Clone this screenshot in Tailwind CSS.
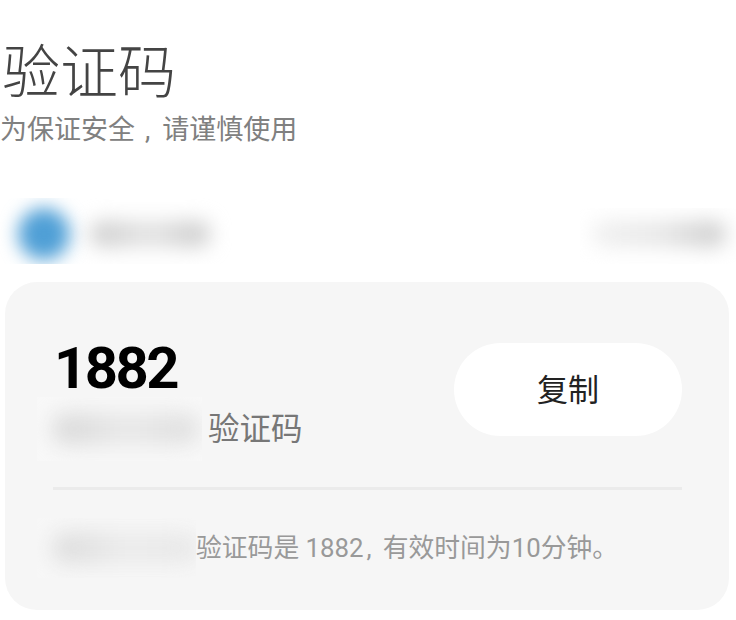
<!DOCTYPE html>
<html lang="zh-CN">
<head>
<meta charset="utf-8">
<script src="https://cdn.jsdelivr.net/npm/@tailwindcss/browser@4"></script>
</head>
<body class="bg-white overflow-hidden">
<main class="w-[736px] h-[620px] overflow-hidden font-['Roboto','Noto_Sans_CJK_SC',sans-serif]">
  <header class="pt-[38px] pl-[2px] h-[198px]">
    <h1 class="text-[58px] leading-[70px] font-light text-[#444]">验证码</h1>
    <p class="-ml-[2px] mt-[1px] text-[27px] leading-[42px] text-[#808080] whitespace-nowrap">为保证安全<span class="ml-[10px] mr-[12px]">,</span>请谨慎使用</p>
  </header>
  <div class="flex justify-between h-[66px]">
    <div class="relative w-[240px] h-[66px] overflow-hidden bg-white">
      <div class="absolute left-[18px] top-[10px] size-[52px] rounded-full bg-[#4f9fd6] blur-[9px]"></div>
      <div class="absolute left-[90px] top-[23px] w-[120px] h-[26px] rounded-full bg-gradient-to-r from-[#cacaca] via-[#e4e4e4] to-[#c8c8c8] blur-[10px]"></div>
    </div>
    <div class="relative w-[156px] h-[56px] mt-[10px] overflow-hidden bg-white">
      <div class="absolute left-[12px] top-[13px] w-[134px] h-[26px] rounded-full bg-gradient-to-r from-[#f0f0f0] via-[#e8e8e8] to-[#cacaca] blur-[10px]"></div>
    </div>
  </div>
  <section class="mt-[18px] ml-[5px] w-[724px] h-[328px] rounded-[32px] bg-[#f6f6f6] pl-[32px] pr-[47px]">
    <div class="flex justify-between h-[205px]">
      <div class="pt-[59px]">
        <div class="ml-[17px] text-[58px] leading-[55px] tracking-[-2.5px] font-bold text-black">1882</div>
        <div class="flex items-center">
          <div class="relative w-[165px] h-[64px] overflow-hidden bg-[#f8f8f8]">
            <div class="absolute left-[16px] top-[17px] w-[146px] h-[30px] rounded-full bg-gradient-to-r from-[#d4d4d4] via-[#e8e8e8] to-[#dcdcdc] blur-[11px]"></div>
          </div>
          <span class="ml-[6px] mt-[2px] text-[31.5px] leading-[64px] text-[#777]">验证码</span>
        </div>
      </div>
      <button class="mt-[61px] pt-[3px] w-[228px] h-[93px] rounded-full bg-white text-[31px] text-[#222]">复制</button>
    </div>
    <div class="ml-[16px] h-[3px] bg-[#ebebeb]"></div>
    <div class="flex items-center mt-[28px]">
      <div class="relative w-[159px] h-[60px] overflow-hidden bg-[#f7f7f7]">
        <div class="absolute left-[16px] top-[15px] w-[146px] h-[30px] rounded-full bg-gradient-to-r from-[#d8d8d8] via-[#ebebeb] to-[#e6e6e6] blur-[11px]"></div>
      </div>
      <p class="text-[25.8px] leading-[60px] text-[#999] whitespace-nowrap">验证码是 1882<span class="ml-[3px] mr-[11px]">,</span>有效时间为10分钟。</p>
    </div>
  </section>
</main>
</body>
</html>
